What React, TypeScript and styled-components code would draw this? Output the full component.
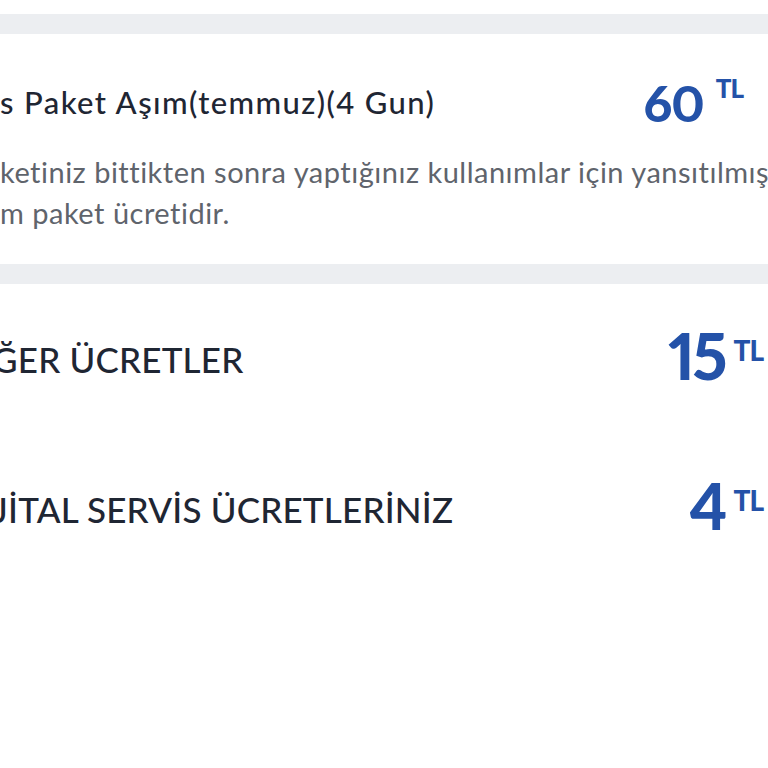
import React from "react";
import styled, { createGlobalStyle } from "styled-components";

const GlobalStyle = createGlobalStyle`
  html, body {
    margin: 0;
    padding: 0;
    background: #ffffff;
    overflow: hidden;
  }
  body {
    font-family: Lato, "Noto Sans", "Liberation Sans", sans-serif;
    -webkit-font-smoothing: antialiased;
  }
`;

const Page = styled.div`
  width: 768px;
  height: 768px;
  padding-top: 14px;
  box-sizing: border-box;
  display: flex;
  flex-direction: column;
  background: #ffffff;
  overflow: hidden;
`;

const Separator = styled.div`
  height: 20px;
  background: #eceef1;
  flex: none;
`;

const Card = styled.section`
  height: 230px;
  box-sizing: border-box;
  padding: 45px 25px 0 0;
  display: flex;
  flex-direction: column;
  gap: 27px;
`;

const Row = styled.div`
  display: flex;
  align-items: center;
  justify-content: space-between;
`;

const Title = styled.h3`
  margin: 0;
  font-size: 31px;
  line-height: 36px;
  font-weight: 500;
  letter-spacing: 1.4px;
  color: #1f2633;
  white-space: nowrap;
`;

const Description = styled.p`
  margin: 0;
  width: 860px;
  font-size: 29px;
  line-height: 41px;
  letter-spacing: 0.5px;
  color: #5f646c;
  white-space: nowrap;
`;

const Amount = styled.div<{ $big?: boolean }>`
  display: flex;
  align-items: flex-start;
  gap: ${(p) => (p.$big ? 9 : 12)}px;
  margin-top: ${(p) => (p.$big ? -7 : 3)}px;
  color: #2452a8;
  font-weight: 900;
`;

const Number = styled.span<{ $big?: boolean }>`
  font-size: ${(p) => (p.$big ? 64 : 50)}px;
  line-height: ${(p) => (p.$big ? 56 : 42)}px;
  letter-spacing: ${(p) => (p.$big ? -3 : -1)}px;
  font-variant-numeric: proportional-nums;
`;

const Currency = styled.span<{ $big?: boolean }>`
  font-size: ${(p) => (p.$big ? 28 : 26)}px;
  line-height: 20px;
  margin-top: ${(p) => (p.$big ? 12 : -4)}px;
  letter-spacing: -1px;
`;

const ChargeList = styled.div`
  display: flex;
  flex-direction: column;
  padding: 0 5px 0 0;
`;

const ChargeRow = styled.div`
  height: 150px;
  display: flex;
  align-items: center;
  justify-content: space-between;
`;

const ChargeLabel = styled.span<{ $shift: number }>`
  margin-left: ${(p) => p.$shift}px;
  font-size: 35px;
  font-weight: 500;
  color: #1f2633;
  letter-spacing: 0.2px;
  white-space: nowrap;
`;

const charges = [
  { label: "ĞER ÜCRETLER", amount: "15", shift: -8 },
  { label: "JİTAL SERVİS ÜCRETLERİNİZ", amount: "4", shift: -7 },
];

export default function App() {
  return (
    <>
      <GlobalStyle />
      <Page>
        <Separator />
        <Card>
          <Row>
            <Title>s Paket Aşım(temmuz)(4 Gun)</Title>
            <Amount>
              <Number>60</Number>
              <Currency>TL</Currency>
            </Amount>
          </Row>
          <Description>
            ketiniz bittikten sonra yaptığınız kullanımlar için yansıtılmış
            <br />
            m paket ücretidir.
          </Description>
        </Card>
        <Separator />
        <ChargeList>
          {charges.map((c) => (
            <ChargeRow key={c.label}>
              <ChargeLabel $shift={c.shift}>{c.label}</ChargeLabel>
              <Amount $big>
                <Number $big>{c.amount}</Number>
                <Currency $big>TL</Currency>
              </Amount>
            </ChargeRow>
          ))}
        </ChargeList>
      </Page>
    </>
  );
}
